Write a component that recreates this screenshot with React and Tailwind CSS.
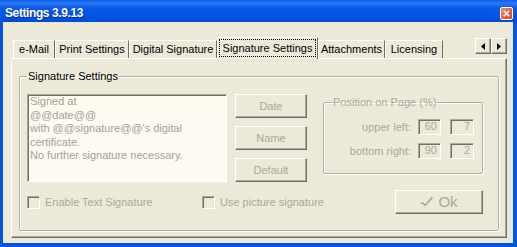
import React from 'react';

const TABS = [
    { label: 'e-Mail', w: 'w-[42px]' },
    { label: 'Print Settings', w: 'w-[74px]' },
    { label: 'Digital Signature', w: 'w-[88px]' },
    { label: 'Signature Settings', w: 'w-[101px]', active: true },
    { label: 'Attachments', w: 'w-[67px]' },
    { label: 'Licensing', w: 'w-[58px]' },
];

const raised =
    'border border-t-white border-l-white border-r-[#716F64] border-b-[#716F64] shadow-[inset_-1px_-1px_0_#ACA899]';
const sunken =
    'border border-t-[#ACA899] border-l-[#ACA899] border-r-white border-b-white shadow-[inset_1px_1px_0_#716F64]';

const Tab = ({ label, w, active }) => {
    if (active) {
        return (
            <div
                className={`${w} relative z-10 -mb-[1px] flex h-[22px] items-center justify-center border-t border-l border-r border-t-white border-l-white border-r-[#716F64] bg-[#ECE9D8] px-[1px] pb-[2px] pt-[1px]`}
            >
                <span className="flex h-full w-full items-center justify-center border border-dotted border-black text-[11px] leading-[13px] text-black">
                    {label}
                </span>
            </div>
        );
    }
    return (
        <div
            className={`${w} flex h-[18px] items-center justify-center border-t border-l border-r border-t-white border-l-white border-r-[#716F64] text-[11px] leading-[13px] text-black`}
        >
            {label}
        </div>
    );
};

const ArrowButton = ({ dir }) => (
    <div className={`${raised} flex h-[16px] w-[16px] items-center justify-center bg-[#ECE9D8]`}>
        <svg width="4" height="7" viewBox="0 0 4 7">
            {dir === 'left' ? <path d="M4 0 L0 3.5 L4 7 Z" fill="#000" /> : <path d="M0 0 L4 3.5 L0 7 Z" fill="#000" />}
        </svg>
    </div>
);

const PushButton = ({ children, className = '' }) => (
    <div
        className={`${raised} ${className} flex items-center justify-center bg-[#ECE9D8] text-[11px] text-[#ACA899]`}
    >
        {children}
    </div>
);

const NumBox = ({ value, w }) => (
    <div className={`${sunken} ${w} h-[16px] bg-[#ECE9D8] pr-[3px] text-right text-[11px] leading-[13px] text-[#ACA899]`}>
        {value}
    </div>
);

const CheckBox = ({ label }) => (
    <div className="flex items-center">
        <div className={`${sunken} h-[13px] w-[13px] bg-[#ECE9D8]`} />
        <span className="ml-[5px] text-[11px] text-[#ACA899]">{label}</span>
    </div>
);

export default function App() {
    return (
        <div className="flex h-[247px] w-[517px] flex-col bg-[#0055E5] font-['Liberation_Sans',Arial,sans-serif]">
            {/* title bar */}
            <div className="flex h-[22px] items-center justify-between bg-[linear-gradient(to_bottom,#0A5CE8_0%,#2B7BF5_15%,#0A5AE8_35%,#0054E3_75%,#0049D6_100%)] pl-[5px] pr-[4px] pt-[4px]">
                <span className="text-[12px] font-bold leading-[14px] tracking-[-0.4px] text-white [text-shadow:1px_1px_0_#0A2F8C]">
                    Settings 3.9.13
                </span>
                <div className="flex h-[13px] w-[13px] items-center justify-center rounded-[2px] border border-white bg-[linear-gradient(to_bottom_right,#F08A6A,#D9431C)]">
                    <svg width="7" height="7" viewBox="0 0 7 7">
                        <path d="M0.8 0.8 L6.2 6.2 M6.2 0.8 L0.8 6.2" stroke="#fff" strokeWidth="1.6" />
                    </svg>
                </div>
            </div>

            {/* dialog body */}
            <div className="mb-[4px] ml-[3px] mr-[4px] flex flex-1 flex-col bg-[#ECE9D8] pb-[5px] pl-[8px] pr-[6px] pt-[15px]">
                <div className="flex h-[21px] items-end justify-between">
                    <div className="ml-[2px] flex items-end">
                        {TABS.map(t => (
                            <Tab key={t.label} {...t} />
                        ))}
                    </div>
                    <div className="mb-[4px] flex">
                        <ArrowButton dir="left" />
                        <ArrowButton dir="right" />
                    </div>
                </div>

                <div className="flex flex-1 flex-col border border-t-white border-l-white border-r-[#716F64] border-b-[#716F64] px-[7px] pb-[6px] pt-[11px] shadow-[inset_-1px_-1px_0_#ACA899]">
                    <fieldset className="flex-1 rounded-[2px] border border-[#B4B0A3] px-[7px] shadow-[1px_1px_0_#fff,inset_1px_1px_0_#fff]">
                        <legend className="ml-0 px-[1px] text-[11px] leading-[13px] text-black">Signature Settings</legend>

                        <div className="flex pt-[11px]">
                            <div
                                className={`${sunken} h-[88px] w-[200px] whitespace-pre-line bg-[#FCFAF1] pl-[2px] text-[11px] leading-[13.5px] text-[#A5A29A]`}
                            >
                                {'Signed at\n@@date@@\nwith @@signature@@\'s digital\ncertificate.\nNo further signature necessary.'}
                            </div>

                            <div className="ml-[8px] flex w-[72px] flex-col gap-[8px]">
                                <PushButton className="h-[24px]">Date</PushButton>
                                <PushButton className="h-[24px]">Name</PushButton>
                                <PushButton className="h-[24px]">Default</PushButton>
                            </div>

                            <fieldset className="ml-[16px] mt-[2px] h-[78px] w-[160px] rounded-[2px] border border-[#B4B0A3] px-[8px] shadow-[1px_1px_0_#fff,inset_1px_1px_0_#fff]">
                                <legend className="px-[1px] text-[11px] leading-[13px] text-[#ACA899]">Position on Page (%)</legend>
                                <div className="flex flex-col gap-[7px] pt-[10px]">
                                    <div className="flex items-center justify-end">
                                        <span className="mr-[7px] text-[11px] text-[#ACA899]">upper left:</span>
                                        <NumBox value="60" w="w-[23px]" />
                                        <div className="w-[9px]" />
                                        <NumBox value="7" w="w-[24px]" />
                                    </div>
                                    <div className="flex items-center justify-end">
                                        <span className="mr-[7px] text-[11px] text-[#ACA899]">bottom right:</span>
                                        <NumBox value="90" w="w-[23px]" />
                                        <div className="w-[9px]" />
                                        <NumBox value="2" w="w-[24px]" />
                                    </div>
                                </div>
                            </fieldset>
                        </div>

                        <div className="mt-[8px] flex h-[24px] items-center">
                            <div className="w-[175px]">
                                <CheckBox label="Enable Text Signature" />
                            </div>
                            <CheckBox label="Use picture signature" />
                            <PushButton className="ml-auto mr-[8px] h-[24px] w-[88px] gap-[4px]">
                                <svg width="14" height="12" viewBox="0 0 14 12">
                                    <path d="M1.5 6.5 L5 10 L12.5 1.5" fill="none" stroke="#ACA899" strokeWidth="2.4" />
                                    <path d="M2 8 L5 11 L13 2.5" fill="none" stroke="#fff" strokeWidth="0.8" />
                                </svg>
                                <span className="text-[15px] leading-[16px] text-[#ACA899]">Ok</span>
                            </PushButton>
                        </div>
                    </fieldset>
                </div>
            </div>
        </div>
    );
}
